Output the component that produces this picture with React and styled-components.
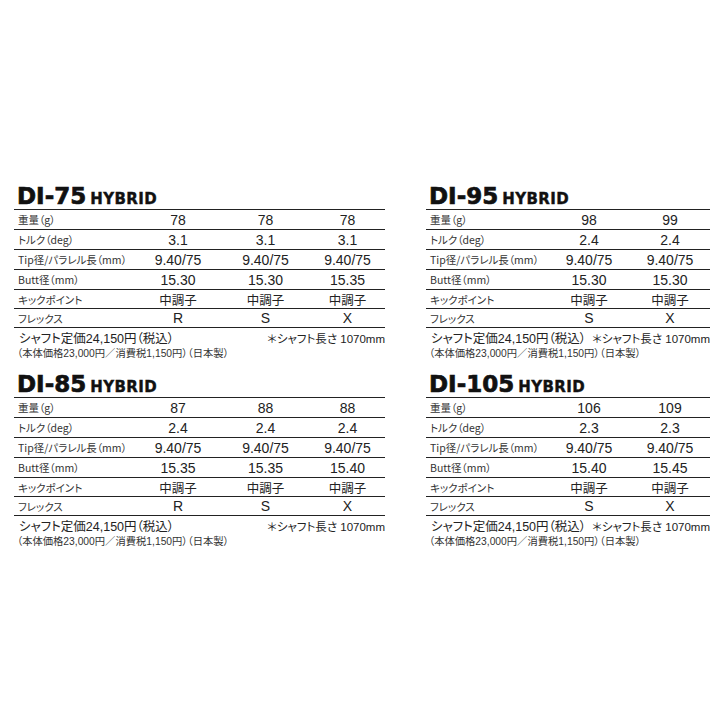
import React from "react";
import styled, { createGlobalStyle } from "styled-components";

const Global = createGlobalStyle`
  html, body { margin: 0; padding: 0; background: #fff; }
  body { font-family: "Liberation Sans", "Noto Sans CJK JP", sans-serif; color: #222; }
`;

const Page = styled.div`
  width: 727px;
  height: 727px;
  box-sizing: border-box;
  padding: 184px 0 0 14px;
  display: grid;
  grid-template-columns: 371px 284px;
  grid-auto-rows: min-content;
  column-gap: 41px;
  row-gap: 12px;
  background: #fff;
`;

const Section = styled.section`
  display: flex;
  flex-direction: column;
`;

const Title = styled.h2`
  margin: 0;
  height: 25px;
  display: flex;
  align-items: baseline;
  font-family: "DejaVu Sans", sans-serif;
  font-weight: 700;
  font-size: 23px;
  line-height: 24px;
  color: #111;
  padding-left: 3px;
  -webkit-text-stroke: 0.7px #111;
`;

const Sub = styled.span`
  font-size: 15px;
  margin-left: 4px;
  letter-spacing: 0.4px;
  -webkit-text-stroke: 0.4px #111;
`;

const Table = styled.div`
  border-top: 1px solid #222;
`;

const Row = styled.div`
  display: grid;
  grid-template-columns: ${(p) => p.$cols};
  height: ${(p) => p.$h}px;
  box-sizing: border-box;
  border-bottom: 1px solid #222;
  align-items: center;
`;

const Label = styled.div`
  padding-left: 4px;
  font-family: "Noto Sans CJK JP", sans-serif;
  font-feature-settings: "palt";
  font-size: 10.5px;
  color: #333;
  white-space: nowrap;
`;

const Value = styled.div`
  text-align: center;
  font-family: "Liberation Sans", "Noto Sans CJK JP", sans-serif;
  font-size: ${(p) => (p.$jp ? 12.5 : 14)}px;
  color: #222;
  white-space: nowrap;
`;

const FootMain = styled.div`
  display: flex;
  justify-content: space-between;
  align-items: baseline;
  height: 17px;
  margin-top: 2px;
  padding-left: 5px;
  white-space: nowrap;
`;

const Price = styled.span`
  font-family: "Liberation Sans", "Noto Sans CJK JP", sans-serif;
  font-feature-settings: "palt";
  font-size: 12.5px;
  line-height: 17px;
  color: #222;
`;

const Note = styled.span`
  font-family: "Liberation Sans", "Noto Sans CJK JP", sans-serif;
  font-feature-settings: "palt";
  font-size: 11.5px;
  color: #222;
`;

const FootSmall = styled.div`
  padding-left: 3px;
  font-family: "Liberation Sans", "Noto Sans CJK JP", sans-serif;
  font-feature-settings: "palt";
  font-size: 10.3px;
  line-height: 13px;
  color: #333;
  white-space: nowrap;
`;

const LABELS = [
  "重量（g）",
  "トルク（deg）",
  "Tip径/パラレル長（mm）",
  "Butt径（mm）",
  "キックポイント",
  "フレックス",
];
const HEIGHTS = [20, 20, 20, 20, 19, 19];

const DATA = [
  {
    name: "DI-75",
    values: [
      ["78", "78", "78"],
      ["3.1", "3.1", "3.1"],
      ["9.40/75", "9.40/75", "9.40/75"],
      ["15.30", "15.30", "15.35"],
      ["中調子", "中調子", "中調子"],
      ["R", "S", "X"],
    ],
  },
  {
    name: "DI-95",
    values: [
      ["98", "99"],
      ["2.4", "2.4"],
      ["9.40/75", "9.40/75"],
      ["15.30", "15.30"],
      ["中調子", "中調子"],
      ["S", "X"],
    ],
  },
  {
    name: "DI-85",
    values: [
      ["87", "88", "88"],
      ["2.4", "2.4", "2.4"],
      ["9.40/75", "9.40/75", "9.40/75"],
      ["15.35", "15.35", "15.40"],
      ["中調子", "中調子", "中調子"],
      ["R", "S", "X"],
    ],
  },
  {
    name: "DI-105",
    values: [
      ["106", "109"],
      ["2.3", "2.3"],
      ["9.40/75", "9.40/75"],
      ["15.40", "15.45"],
      ["中調子", "中調子"],
      ["S", "X"],
    ],
  },
];

function Spec({ name, values }) {
  const cols = values[0].length === 3 ? "121px 86px 89px 75px" : "122px 82px 80px";
  return (
    <Section>
      <Title>
        {name}
        <Sub>HYBRID</Sub>
      </Title>
      <Table>
        {LABELS.map((label, i) => (
          <Row key={label} $cols={cols} $h={HEIGHTS[i]}>
            <Label>{label}</Label>
            {values[i].map((v, j) => (
              <Value key={j} $jp={v === "中調子"}>
                {v}
              </Value>
            ))}
          </Row>
        ))}
      </Table>
      <FootMain>
        <Price>シャフト定価24,150円（税込）</Price>
        <Note>＊シャフト長さ 1070mm</Note>
      </FootMain>
      <FootSmall>（本体価格23,000円／消費税1,150円）（日本製）</FootSmall>
    </Section>
  );
}

export default function App() {
  return (
    <>
      <Global />
      <Page>
        {DATA.map((d) => (
          <Spec key={d.name} {...d} />
        ))}
      </Page>
    </>
  );
}
